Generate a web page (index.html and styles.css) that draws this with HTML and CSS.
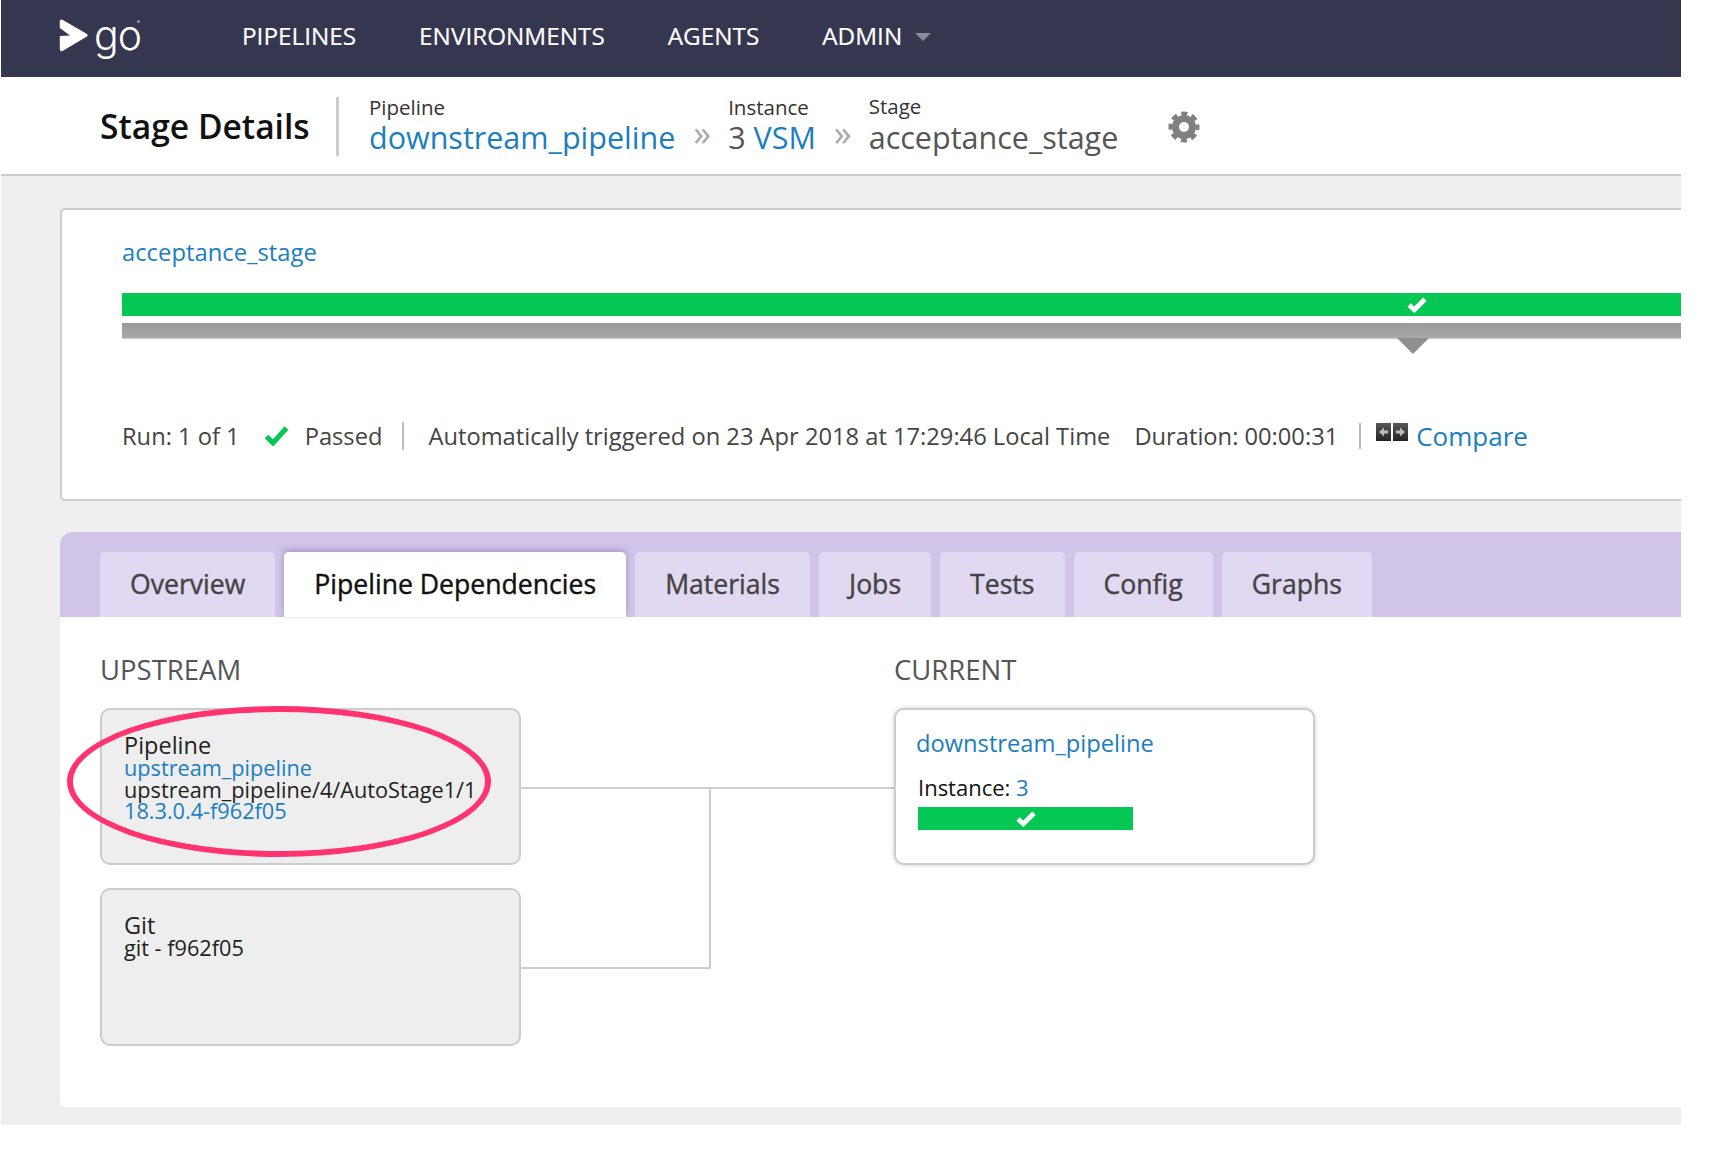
FILE: index.html
```html
<!DOCTYPE html>
<html lang="en">
<head>
	<meta charset="UTF-8">
	<title>Stage Details</title>
	<link rel="stylesheet" href="styles.css">
</head>
<body>
	<div id="page">
		<nav class="topnav">
			<a class="logo" href="#">
				<svg class="logo-mark" viewBox="0 0 30 34" width="30" height="34">
					<path d="M3 1.500 L28 16 Q29.500 17.200 28 18.500 L3.500 33 Q1 34 0.800 31 L0.800 18 L11 17.500 L0.800 10 L0.800 3 Q1 1 3 1.500 Z" fill="#fff"/>
				</svg>
				<span class="logo-text">go</span>
				<i class="logo-dot"></i>
			</a>
			<ul class="menu">
				<li><a href="#">PIPELINES</a></li>
				<li><a href="#">ENVIRONMENTS</a></li>
				<li><a href="#">AGENTS</a></li>
				<li><a href="#">ADMIN</a><i class="caret"></i></li>
			</ul>
		</nav>

		<header class="pagehead">
			<h1>Stage Details</h1>
			<div class="crumbs">
				<div class="crumb crumb-pipeline">
					<label>Pipeline</label>
					<a href="#">downstream_pipeline</a>
				</div>
				<span class="sep">»</span>
				<div class="crumb crumb-instance">
					<label>Instance</label>
					<span>3 <a href="#">VSM</a></span>
				</div>
				<span class="sep">»</span>
				<div class="crumb crumb-stage">
					<label>Stage</label>
					<span>acceptance_stage</span>
				</div>
			</div>
			<svg class="gear" viewBox="0 0 32 32" width="32" height="32">
				<circle cx="16" cy="16" r="13" fill="none" stroke="#808080" stroke-width="5" stroke-dasharray="5.800 4.400" stroke-dashoffset="2.900"/>
				<circle cx="16" cy="16" r="8.500" fill="none" stroke="#808080" stroke-width="7"/>
			</svg>
		</header>

		<main class="content">
			<section class="stage-card">
				<a class="stage-name" href="#">acceptance_stage</a>
				<div class="bar-pass">
					<svg class="check-white" viewBox="0 0 20 16" width="22" height="17"><path d="M2.500 8.500 L7.500 13 L17.500 3" fill="none" stroke="#fff" stroke-width="4.500"/></svg>
				</div>
				<div class="bar-gray"><i class="pointer"></i></div>
				<div class="run-info">
					<span>Run: 1 of 1</span>
					<svg class="check-green" viewBox="0 0 25 20" width="25" height="20"><path d="M2.500 10.500 L9 17 L22.500 2" fill="none" stroke="#04c853" stroke-width="5"/></svg>
					<span class="passed">Passed</span>
					<span class="auto">Automatically triggered on 23 Apr 2018 at 17:29:46 Local Time</span>
					<span class="duration">Duration: 00:00:31</span>
					<span class="compare">
						<svg class="compare-icon" viewBox="0 0 32 18" width="32" height="18">
							<defs>
								<linearGradient id="cmp" x1="0" y1="0" x2="0" y2="1">
									<stop offset="0" stop-color="#5a5a5a"/>
									<stop offset="1" stop-color="#222"/>
								</linearGradient>
							</defs>
							<rect x="0" y="0" width="15" height="18" fill="url(#cmp)"/>
							<rect x="17" y="0" width="15" height="18" fill="url(#cmp)"/>
							<path d="M3 9 L8 4.500 V7.500 H12 V10.500 H8 V13.500 Z" fill="#bbb"/>
							<path d="M29 9 L24 4.500 V7.500 H20 V10.500 H24 V13.500 Z" fill="#bbb"/>
						</svg>
						<a href="#">Compare</a>
					</span>
				</div>
			</section>

			<section class="tabbed">
				<ul class="tabs">
					<li>Overview</li>
					<li class="active">Pipeline Dependencies</li>
					<li>Materials</li>
					<li>Jobs</li>
					<li>Tests</li>
					<li>Config</li>
					<li>Graphs</li>
				</ul>
				<div class="tab-body">
					<div class="col-upstream">
						<h3>UPSTREAM</h3>
						<div class="dep-card dep-pipeline">
							<b>Pipeline</b>
							<a href="#">upstream_pipeline</a>
							<span>upstream_pipeline/4/AutoStage1/1</span>
							<a href="#">18.3.0.4-f962f05</a>
							<i class="highlight"></i>
						</div>
						<div class="dep-card dep-git">
							<b>Git</b>
							<span>git - f962f05</span>
						</div>
					</div>
					<svg class="links" viewBox="0 0 373 338" width="373" height="338">
						<path d="M0 80 H373 M189 80 V260 H0" fill="none" stroke="#ccc" stroke-width="2"/>
					</svg>
					<div class="col-current">
						<h3>CURRENT</h3>
						<div class="current-card">
							<a class="current-name" href="#">downstream_pipeline</a>
							<div class="current-instance">Instance: <a href="#">3</a></div>
							<div class="current-bar">
								<svg class="check-white" viewBox="0 0 20 16" width="22" height="17"><path d="M2.500 8.500 L7.500 13 L17.500 3" fill="none" stroke="#fff" stroke-width="4.500"/></svg>
							</div>
						</div>
					</div>
				</div>
			</section>
		</main>
	</div>
</body>
</html>
```

FILE: styles.css
```css
* {
	margin: 0;
	padding: 0;
	box-sizing: border-box;
}
html, body {
	background-color: #fff;
}
body {
	font-family: "Open Sans", "Liberation Sans", sans-serif;
	color: #333;
}
a {
	color: #1a7ebf;
	text-decoration: none;
}
ul {
	list-style-type: none;
}
#page {
	width: 1680px;
	margin-left: 1px;
	overflow: hidden;
}

/* top navigation */
.topnav {
	height: 77px;
	background-color: #353650;
	display: flex;
	align-items: center;
}
.logo {
	width: 241px;
	height: 77px;
	padding-left: 58px;
	padding-top: 18px;
	display: flex;
	align-items: flex-start;
	position: relative;
}
.logo-text {
	color: #fff;
	font-family: Inter, sans-serif;
	font-weight: 300;
	font-size: 41px;
	line-height: 34px;
	margin-left: 5px;
	letter-spacing: -1px;
}
.logo-dot {
	position: absolute;
	left: 136px;
	top: 20px;
	width: 3px;
	height: 3px;
	border-radius: 50%;
	background-color: #99a;
}
.menu {
	display: flex;
	gap: 63px;
	margin-bottom: 6px;
}
.menu a {
	color: #fff;
	font-size: 24.300px;
	line-height: 32px;
	-webkit-text-stroke: .2px #fff;
}
.menu li {
	display: flex;
	align-items: center;
}
.caret {
	margin-left: 13px;
	margin-top: 2px;
	border-left: 8px solid transparent;
	border-right: 8px solid transparent;
	border-top: 8px solid #8a8b9c;
}

/* page header */
.pagehead {
	height: 99px;
	background-color: #fff;
	border-bottom: 2px solid #ccc;
	padding-left: 99px;
	display: flex;
	align-items: flex-start;
}
.pagehead h1 {
	width: 236px;
	margin-top: 24px;
	font-size: 33.600px;
	line-height: 50px;
	font-weight: 600;
	color: #111;
}
.crumbs {
	height: 59px;
	margin-top: 20px;
	border-left: 3px solid #ccc;
	padding-left: 30px;
	display: flex;
}
.crumb {
	margin-top: -1px;
}
.crumb label {
	display: block;
	font-size: 20.500px;
	line-height: 23px;
	color: #333;
}
.crumb a, .crumb span {
	display: block;
	font-size: 30.500px;
	line-height: 36px;
	color: #555;
}
.crumb span a {
	display: inline;
	color: #1a7ebf;
}
.crumb-pipeline a {
	color: #1a7ebf;
}
.crumb-stage {
	margin-top: -2px;
}
.crumb-stage span {
	margin-top: 1px;
}
.sep {
	color: #aaa;
	font-size: 36px;
	line-height: 30px;
	margin: 21px 17px 0 18px;
}
.gear {
	margin-left: 50px;
	margin-top: 34px;
}

/* main area */
.content {
	background-color: #eee;
	padding: 32px 0 18px 59px;
}
.stage-card {
	height: 293px;
	width: 1700px;
	background-color: #fff;
	border: 2px solid #ccc;
	border-radius: 5px;
	padding: 26px 0 0 60px;
}
.stage-name {
	display: block;
	font-size: 23.800px;
	line-height: 32px;
}
.bar-pass {
	margin-top: 25px;
	height: 23px;
	background-color: #04c853;
	padding-left: 1284px;
	display: flex;
	align-items: center;
}
.bar-gray {
	margin-top: 7px;
	height: 16px;
	background-image: linear-gradient(#999, #aaa);
	border-bottom: 1px solid #ccc;
	position: relative;
}
.pointer {
	position: absolute;
	left: 1275px;
	top: 15px;
	border-left: 16px solid transparent;
	border-right: 16px solid transparent;
	border-top: 16px solid #8f8f8f;
}
.run-info {
	margin-top: 79px;
	display: flex;
	align-items: center;
	height: 36px;
	font-size: 23.700px;
	color: #444;
}
.check-green {
	margin-left: 24px;
}
.passed {
	margin-left: 16px;
	padding-right: 20px;
	border-right: 2px solid #bbb;
	line-height: 28px;
}
.auto {
	margin-left: 24px;
}
.duration {
	margin-left: 24px;
}
.compare {
	margin-left: 21px;
	border-left: 2px solid #bbb;
	padding-left: 15px;
	display: flex;
	align-items: center;
	height: 26px;
}
.compare-icon {
	margin-top: -8px;
}
.compare a {
	margin-left: 8px;
	font-size: 26px;
}

/* tabs */
.tabbed {
	margin-top: 31px;
	width: 1700px;
}
.tabs {
	height: 85px;
	padding: 20px 0 0 40px;
	background-color: #d0c4e8;
	border-radius: 13px 0 0 0;
	display: flex;
	gap: 9px;
}
.tabs li {
	height: 65px;
	padding: 0 30px;
	font-size: 26.600px;
	line-height: 64px;
	color: #444;
	-webkit-text-stroke: .4px #444;
	background-color: #e0d9f1;
	border-radius: 5px 5px 0 0;
}
.tabs .active {
	background-color: #fff;
	color: #111;
	-webkit-text-stroke: .4px #111;
	box-shadow: 0 -2px 6px rgba(80, 60, 120, .35);
}
.tab-body {
	height: 490px;
	background-color: #fff;
	border-radius: 0 0 0 5px;
	padding: 32px 0 0 40px;
	display: flex;
	align-items: flex-start;
}
.tab-body h3 {
	font-size: 27.500px;
	line-height: 42px;
	font-weight: 400;
	color: #555;
	margin-bottom: 17px;
}
.links {
	margin-top: 59px;
	display: block;
}
.dep-card {
	width: 421px;
	height: 157px;
	background-color: #eee;
	border: 2px solid #ccc;
	border-radius: 10px;
	padding: 24px 0 0 22px;
	margin-bottom: 23px;
	font-size: 21.700px;
	line-height: 21.700px;
	color: #222;
	position: relative;
}
.dep-git {
	height: 158px;
}
.dep-card b {
	display: block;
	font-weight: 400;
	font-size: 23.500px;
	line-height: 23px;
}
.dep-card a, .dep-card span {
	display: block;
}
.highlight {
	position: absolute;
	left: -35px;
	top: -4px;
	width: 424px;
	height: 151px;
	border: 6px solid #ff3370;
	border-radius: 50%;
}
.current-card {
	width: 421px;
	height: 157px;
	background-color: #fff;
	border: 2px solid #ccc;
	border-radius: 10px;
	box-shadow: 0 0 4px rgba(0, 0, 0, .2);
	padding: 17px 0 0 20px;
}
.current-name {
	display: block;
	font-size: 23.700px;
	line-height: 32px;
}
.current-instance {
	margin-top: 13px;
	margin-left: 2px;
	font-size: 22px;
	line-height: 30px;
	color: #111;
}
.current-bar {
	margin-top: 5px;
	margin-left: 2px;
	width: 215px;
	height: 23px;
	background-color: #04c853;
	display: flex;
	align-items: center;
	justify-content: center;
}
```
